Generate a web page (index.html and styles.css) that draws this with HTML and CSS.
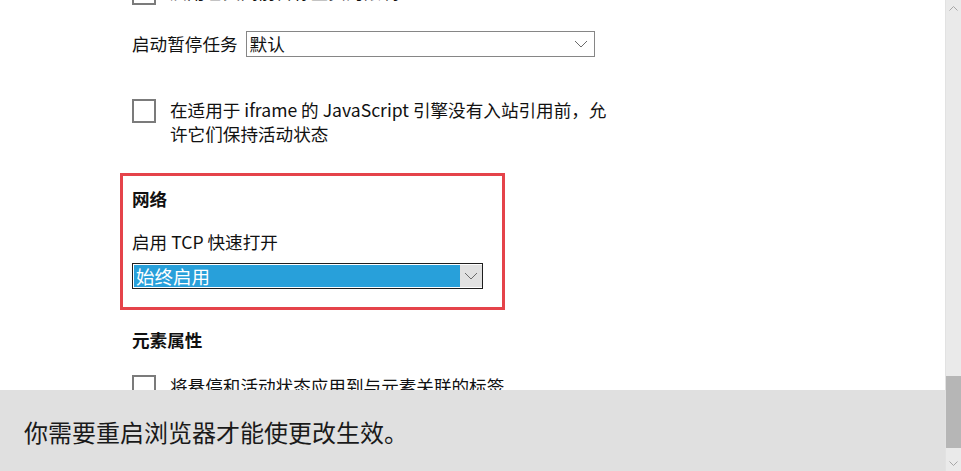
FILE: index.html
```html
<!DOCTYPE html>
<html lang="zh-CN">
<head>
<meta charset="utf-8">
<title>设置</title>
<link rel="stylesheet" href="styles.css">
</head>
<body>
<div class="window">
  <main class="pane">
    <div class="content">
      <div class="check-row first">
        <span class="checkbox"></span>
        <span class="check-label">启用已关闭前台标签页的限制</span>
      </div>

      <div class="select-row">
        <span class="field-label">启动暂停任务</span>
        <div class="select plain">
          <span class="select-value">默认</span>
          <span class="select-arrow">
            <svg width="14" height="8" viewBox="0 0 14 8"><path d="M1 1 L7 7 L13 1" fill="none" stroke="#6b6b6b" stroke-width="1"/></svg>
          </span>
        </div>
      </div>

      <div class="check-row spaced">
        <span class="checkbox"></span>
        <span class="check-label">在适用于 iframe 的 JavaScript 引擎没有入站引用前，允<br>许它们保持活动状态</span>
      </div>

      <section class="group highlighted">
        <h3 class="group-title">网络</h3>
        <div class="field-label block">启用 TCP 快速打开</div>
        <div class="select focused">
          <span class="select-value">始终启用</span>
          <span class="select-arrow">
            <svg width="14" height="8" viewBox="0 0 14 8"><path d="M1 1 L7 7 L13 1" fill="none" stroke="#6b6b6b" stroke-width="1"/></svg>
          </span>
        </div>
      </section>

      <section class="group">
        <h3 class="group-title">元素属性</h3>
        <div class="check-row tight">
          <span class="checkbox"></span>
          <span class="check-label">将悬停和活动状态应用到与元素关联的标签</span>
        </div>
      </section>
    </div>

    <div class="notice">你需要重启浏览器才能使更改生效。</div>
  </main>

  <aside class="scrollbar">
    <span class="scroll-btn">
      <svg width="9" height="5" viewBox="0 0 9 5"><path d="M0.5 4.5 L4.5 0.5 L8.5 4.5" fill="none" stroke="#a6a6a6" stroke-width="1"/></svg>
    </span>
    <span class="scroll-track">
      <span class="scroll-thumb"></span>
    </span>
    <span class="scroll-btn">
      <svg width="9" height="5" viewBox="0 0 9 5"><path d="M0.5 0.5 L4.5 4.5 L8.5 0.5" fill="none" stroke="#a6a6a6" stroke-width="1"/></svg>
    </span>
  </aside>
</div>
</body>
</html>
```

FILE: styles.css
```css
html, body {
  margin: 0;
  padding: 0;
  height: 100%;
  overflow: hidden;
  background: #ffffff;
}

body {
  font-family: "Noto Sans CJK SC", "Noto Sans", "Liberation Sans", sans-serif;
  font-size: 17.6px;
  line-height: 24px;
  color: #111111;
}

.window {
  display: flex;
  height: 471px;
  width: 961px;
}

.pane {
  position: relative;
  flex: 1;
  overflow: hidden;
  background: #ffffff;
}

.content {
  display: flex;
  flex-direction: column;
  align-items: flex-start;
  padding-left: 132px;
}

.check-row {
  display: flex;
  align-items: flex-start;
  gap: 14px;
}

.check-row.first {
  margin-top: -20px;
}

.check-row.spaced {
  margin-top: 41px;
}

.check-row.tight {
  margin-top: 22px;
}

.checkbox {
  flex: none;
  width: 20px;
  height: 20px;
  border: 2px solid #7b7b7b;
  background: #ffffff;
  margin-top: 1px;
}

.check-label {
  white-space: nowrap;
}

.select-row {
  display: flex;
  align-items: center;
  gap: 8px;
  margin-top: 26px;
}

.field-label {
  white-space: nowrap;
}

.field-label.block {
  margin-top: 19px;
}

.select {
  display: flex;
  align-items: stretch;
  height: 24px;
  box-sizing: content-box;
}

.select.plain {
  width: 347px;
  border: 1px solid #868686;
  background: #ffffff;
}

.select.plain .select-value {
  flex: 1;
  padding-left: 3px;
  line-height: 24px;
  color: #111111;
}

.select.plain .select-arrow {
  width: 26px;
  display: flex;
  align-items: center;
  justify-content: center;
}

.select.focused {
  width: 349px;
  margin-top: 9px;
  border: 1px solid #1e1e1e;
  background: #ffffff;
}

.select.focused .select-value {
  flex: 1;
  margin: 1px 0 1px 1px;
  padding-left: 2px;
  font-size: 18.5px;
  line-height: 22px;
  background: #28a0da;
  color: #ffffff;
}

.select.focused .select-arrow {
  width: 22px;
  margin: 1px 0;
  background: #e1e1e1;
  display: flex;
  align-items: center;
  justify-content: center;
}

.group {
  display: flex;
  flex-direction: column;
  align-items: flex-start;
}

.group.highlighted {
  margin-top: 27px;
  margin-left: -12px;
  width: 358px;
  border: 3px solid #e5434a;
  padding: 11px 12px 18px 9px;
}

.group-title {
  margin: 0;
  font-size: 17.6px;
  line-height: 24px;
  font-weight: 700;
  color: #111111;
}

.group.highlighted + .group {
  margin-top: 18px;
}

.notice {
  position: absolute;
  left: 0;
  right: 0;
  top: 390px;
  bottom: 0;
  background: #e0e0e0;
  padding: 30px 0 0 24px;
  font-size: 24px;
  line-height: 24px;
  color: #1a1a1a;
}

.scrollbar {
  flex: none;
  width: 16px;
  display: flex;
  flex-direction: column;
  background: #eaeaea;
  border-left: 1px solid #e2e2e2;
  box-sizing: border-box;
}

.scroll-btn {
  flex: none;
  height: 16px;
  display: flex;
  align-items: center;
  justify-content: center;
}

.scroll-track {
  flex: 1;
  display: flex;
  flex-direction: column;
  justify-content: flex-end;
  padding-bottom: 7px;
}

.scroll-thumb {
  display: block;
  height: 72px;
  background: #b6b6b6;
}
```
